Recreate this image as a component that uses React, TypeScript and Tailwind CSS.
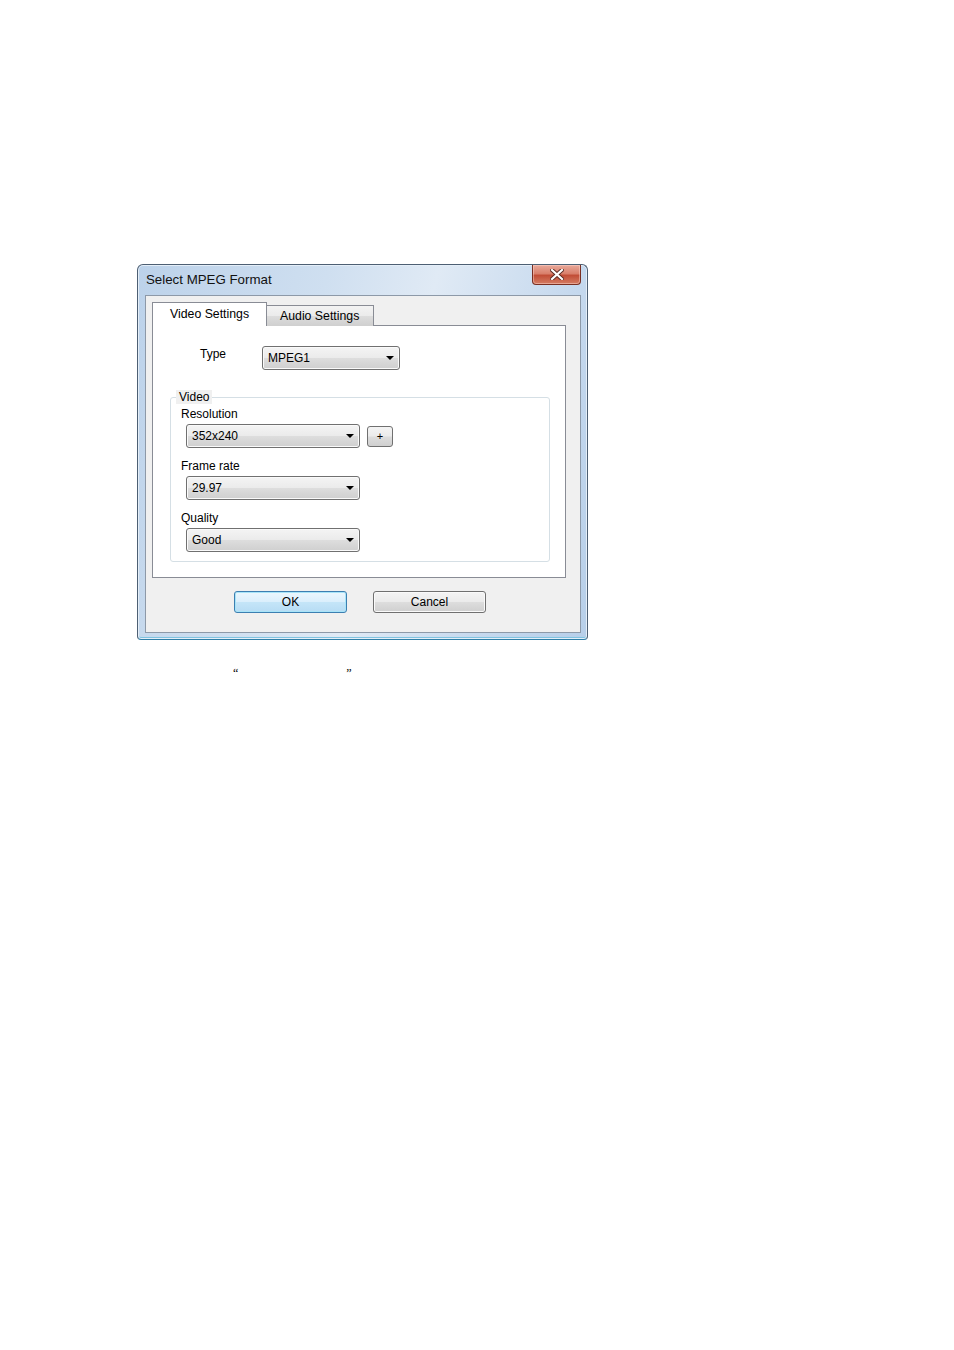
import React from 'react'

const font = { fontFamily: '"Liberation Sans", Arial, sans-serif' }

function Arrow() {
  return (
    <svg width="8" height="4" viewBox="0 0 8 4" className="shrink-0">
      <path d="M0 0 H8 L4 4 Z" fill="#000" />
    </svg>
  )
}

function Combo({ value, width }: { value: string; width: string }) {
  return (
    <div
      className={`${width} h-[24px] box-border flex items-center justify-between pl-[5px] pr-[5px] rounded-[3px] border border-[#707070] bg-[linear-gradient(to_bottom,#f4f4f4_0%,#ebebeb_48%,#dddddd_52%,#cfcfcf_100%)] shadow-[inset_0_0_0_1px_#fafafa]`}
    >
      <span className="text-[12px] leading-[14px] text-black">{value}</span>
      <Arrow />
    </div>
  )
}

function Field({ label, value, first }: { label: string; value: string; first?: boolean }) {
  return (
    <div className={first ? '' : 'mt-[11px]'}>
      <div className="text-[12px] leading-[14px] text-black">{label}</div>
      <div className="mt-[3px] ml-[5px] flex items-center gap-[7px]">
        <Combo value={value} width="w-[174px]" />
        {first && (
          <div className="w-[26px] h-[21px] box-border flex items-center justify-center rounded-[3px] border border-[#707070] bg-[linear-gradient(to_bottom,#f4f4f4_0%,#ebebeb_48%,#dddddd_52%,#cfcfcf_100%)] text-[11px] leading-none text-black">
            +
          </div>
        )}
      </div>
    </div>
  )
}

function CloseButton() {
  return (
    <div className="w-[49px] h-[20px] box-border flex items-center justify-center rounded-b-[4px] border border-t-0 border-[#7a2f22] bg-[linear-gradient(to_bottom,#e9a99b_0%,#d9806c_45%,#c24e37_55%,#d47c63_100%)] shadow-[inset_0_0_0_1px_rgba(255,220,210,0.45)]">
      <svg width="14" height="11" viewBox="0 0 14 11">
        <path d="M2 1 L12 10 M12 1 L2 10" stroke="#5a2a22" strokeWidth="4" strokeLinecap="square" />
        <path d="M2 1 L12 10 M12 1 L2 10" stroke="#ffffff" strokeWidth="2.2" strokeLinecap="square" />
      </svg>
    </div>
  )
}

export default function App() {
  return (
    <div className="min-h-[1350px] w-[954px] bg-white pt-[264px] pl-[137px]" style={font}>
      {/* Dialog window */}
      <div className="w-[451px] h-[376px] box-border rounded-t-[6px] rounded-b-[4px] border border-[#4d5f73] border-b-[#2f7fa8] bg-[linear-gradient(105deg,#bcd2ea_0%,#cfdff0_35%,#e0eaf5_55%,#c6d9ee_80%,#b7cfe9_100%)] shadow-[inset_0_0_0_1px_#e4eef8,inset_0_-2px_0_0_#7fc3e0] flex flex-col">
        {/* Title bar */}
        <div className="h-[30px] flex items-start justify-between pl-[8px] pr-[6px]">
          <span className="mt-[7px] text-[13.3px] leading-[16px] text-[#111]">Select MPEG Format</span>
          <CloseButton />
        </div>

        {/* Client area */}
        <div className="ml-[7px] mr-[6px] h-[338px] box-border border border-[#8d99a8] bg-[#f0f0f0] flex flex-col">
          {/* Tab control */}
          <div className="pt-[6px] pl-[6px]">
            <div className="flex items-end h-[24px]">
              <div className="relative z-10 w-[115px] h-[24px] box-border border border-b-0 border-[#898c95] bg-white pl-[17px] pt-[4px] text-[12.3px] leading-[14px] text-black">
                Video Settings
              </div>
              <div className="w-[107px] h-[21px] box-border border border-l-0 border-b-0 border-[#898c95] bg-[linear-gradient(to_bottom,#f3f3f3_0%,#ebebeb_50%,#dddddd_50%,#cfcfcf_100%)] pl-[13px] pt-[3px] text-[12.3px] leading-[14px] text-black">
                Audio Settings
              </div>
            </div>
            <div className="w-[414px] h-[253px] -mt-[1px] box-border border border-[#898c95] bg-white pt-[20px]">
              {/* Type row */}
              <div className="flex items-start pl-[47px]">
                <span className="w-[62px] pt-[1px] text-[12px] leading-[14px] text-black">Type</span>
                <Combo value="MPEG1" width="w-[138px]" />
              </div>

              {/* Video group */}
              <div className="relative ml-[17px] mt-[27px] w-[380px] box-border rounded-[3px] border border-[#d5dfe5] pt-[9px] pb-[9px] pl-[10px]">
                <span className="absolute left-[5px] -top-[8px] bg-[#f0f0f0] px-[3px] text-[12px] leading-[14px] text-black">
                  Video
                </span>
                <Field label="Resolution" value="352x240" first />
                <Field label="Frame rate" value="29.97" />
                <Field label="Quality" value="Good" />
              </div>
            </div>
          </div>

          {/* Buttons */}
          <div className="mt-[13px] pl-[88px] flex gap-[26px]">
            <div className="w-[113px] h-[22px] box-border flex items-center justify-center rounded-[3px] border border-[#3c7fb1] bg-[linear-gradient(to_bottom,#ecf7fd_0%,#dbeffc_48%,#c4e5f8_52%,#b7dcf4_100%)] shadow-[inset_0_0_0_1px_#a8e4f8] text-[12px] leading-[14px] text-black">
              OK
            </div>
            <div className="w-[113px] h-[22px] box-border flex items-center justify-center rounded-[3px] border border-[#707070] bg-[linear-gradient(to_bottom,#f4f4f4_0%,#ebebeb_48%,#dddddd_52%,#cfcfcf_100%)] shadow-[inset_0_0_0_1px_#fafafa] text-[12px] leading-[14px] text-black">
              Cancel
            </div>
          </div>
        </div>
      </div>

      {/* Caption quotes */}
      <div className="mt-[26px] flex text-[12px] leading-[14px] text-black" style={{ fontFamily: '"Liberation Serif", serif' }}>
        <span className="ml-[96px]">“</span>
        <span className="ml-[108px]">”</span>
      </div>
    </div>
  )
}
